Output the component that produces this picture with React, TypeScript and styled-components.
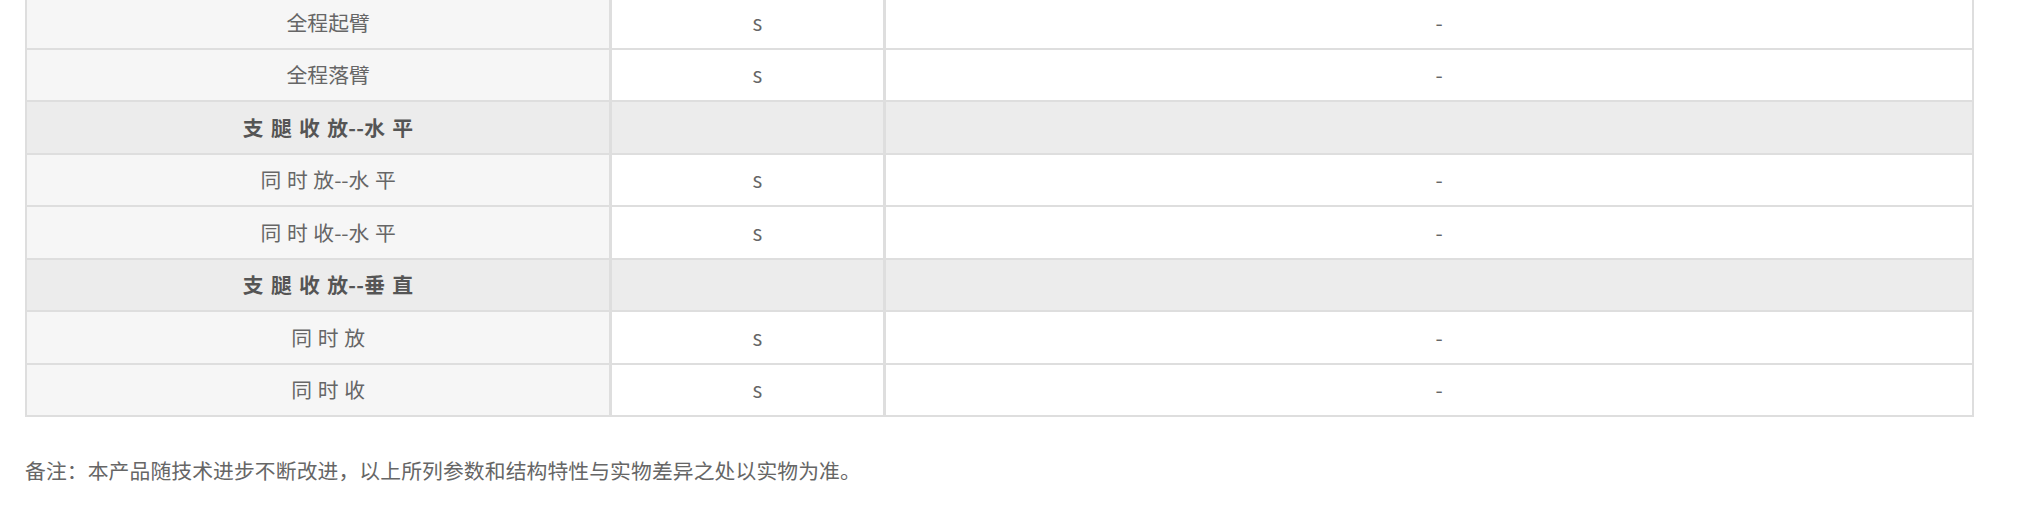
import React from "react";
import styled, { createGlobalStyle } from "styled-components";

const GlobalStyle = createGlobalStyle`
    html, body {
        margin: 0;
        padding: 0;
        background: #ffffff;
    }

    body {
        font-family: "Noto Sans CJK SC", "Noto Sans", sans-serif;
        overflow: hidden;
    }
`;

type Row =
    | { kind: "group"; title: string }
    | { kind: "item"; name: string; unit: string; value: string };

const rows: Row[] = [
    { kind: "item", name: "全程起臂", unit: "s", value: "-" },
    { kind: "item", name: "全程落臂", unit: "s", value: "-" },
    { kind: "group", title: "支 腿 收 放--水 平" },
    { kind: "item", name: "同 时 放--水 平", unit: "s", value: "-" },
    { kind: "item", name: "同 时 收--水 平", unit: "s", value: "-" },
    { kind: "group", title: "支 腿 收 放--垂 直" },
    { kind: "item", name: "同 时 放", unit: "s", value: "-" },
    { kind: "item", name: "同 时 收", unit: "s", value: "-" },
];

const App = () => {
    return (
        <Wrap>
            <GlobalStyle />
            <SpecTable>
                <colgroup>
                    <col style={{ width: 584 }} />
                    <col style={{ width: 274 }} />
                    <col />
                </colgroup>
                <tbody>
                    {rows.map((row, i) =>
                        row.kind === "group" ? (
                            <tr key={i}>
                                <Cell $tone="group" $bold>
                                    {row.title}
                                </Cell>
                                <Cell $tone="group" />
                                <Cell $tone="group" />
                            </tr>
                        ) : (
                            <tr key={i}>
                                <Cell $tone="name">{row.name}</Cell>
                                <Cell>{row.unit}</Cell>
                                <Cell>{row.value}</Cell>
                            </tr>
                        )
                    )}
                </tbody>
            </SpecTable>
            <Note>备注：本产品随技术进步不断改进，以上所列参数和结构特性与实物差异之处以实物为准。</Note>
        </Wrap>
    );
};

export default App;

const Wrap = styled.div`
    width: 1948px;
    padding: 0 0 0 25px;
`;

const SpecTable = styled.table`
    width: 1949px;
    margin-top: -5px;
    border-collapse: collapse;
    table-layout: fixed;

    tr {
        height: 52.5px;
    }
`;

const tones = {
    name: "#f6f6f6",
    group: "#ececec",
    plain: "#ffffff",
};

const Cell = styled.td<{ $tone?: "name" | "group"; $bold?: boolean }>`
    padding: 0;
    border: 2px solid #dedede;
    border-right-width: 3px;
    background: ${(props) => tones[props.$tone || "plain"]};

    color: ${(props) => (props.$bold ? "#555555" : "#666666")};
    font-size: 20.8px;
    font-weight: ${(props) => (props.$bold ? 700 : 400)};
    line-height: 1.5;
    word-spacing: ${(props) => (props.$bold ? "2px" : "1px")};
    letter-spacing: ${(props) => (props.$bold ? "0.3px" : "0")};
    text-align: center;
    text-indent: 1em;
    white-space: pre;

    &:last-child {
        border-right-width: 2px;
    }
`;

const Note = styled.p`
    margin: 38px 0 0;
    color: #666666;
    font-size: 20.8px;
    line-height: 1.5;
    letter-spacing: 0.1px;
`;
